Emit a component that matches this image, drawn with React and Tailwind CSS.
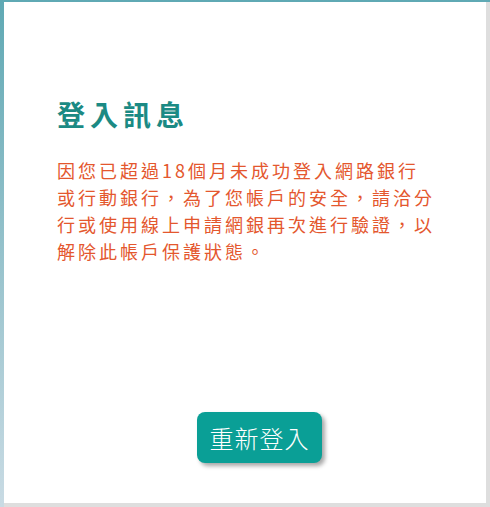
export default function App() {
  return (
    <div
      className="w-[490px] h-[507px] overflow-hidden bg-gradient-to-b from-[#5fa9b4] to-[#c9dbe4] pt-[2px] pl-[4px]"
      style={{ fontFamily: '"Noto Sans CJK TC", "Noto Sans", sans-serif' }}
    >
      <div className="w-[486px] h-[505px] bg-white border-r-[4px] border-b-[4px] border-[#dedede] flex flex-col">
        <div className="pl-[53px] pt-[95px]">
          <h1 className="text-[28px] leading-[34px] font-bold tracking-[5px] text-[#1b8a84]">
            登入訊息
          </h1>
          <p className="mt-[26px] w-[379px] text-[18px] leading-[27px] tracking-[3px] text-[#e4572e]">
            因您已超過18個月未成功登入網路銀行或行動銀行，為了您帳戶的安全，請洽分行或使用線上申請網銀再次進行驗證，以解除此帳戶保護狀態。
          </p>
        </div>
        <div className="mt-auto mb-[40px] pl-[193px]">
          <button className="w-[125px] h-[51px] rounded-[8px] bg-[#0a9f96] text-white text-[24px] font-light shadow-[3px_3px_4px_rgba(0,0,0,0.35)] flex items-center justify-center tracking-[1px]">
            重新登入
          </button>
        </div>
      </div>
    </div>
  );
}
